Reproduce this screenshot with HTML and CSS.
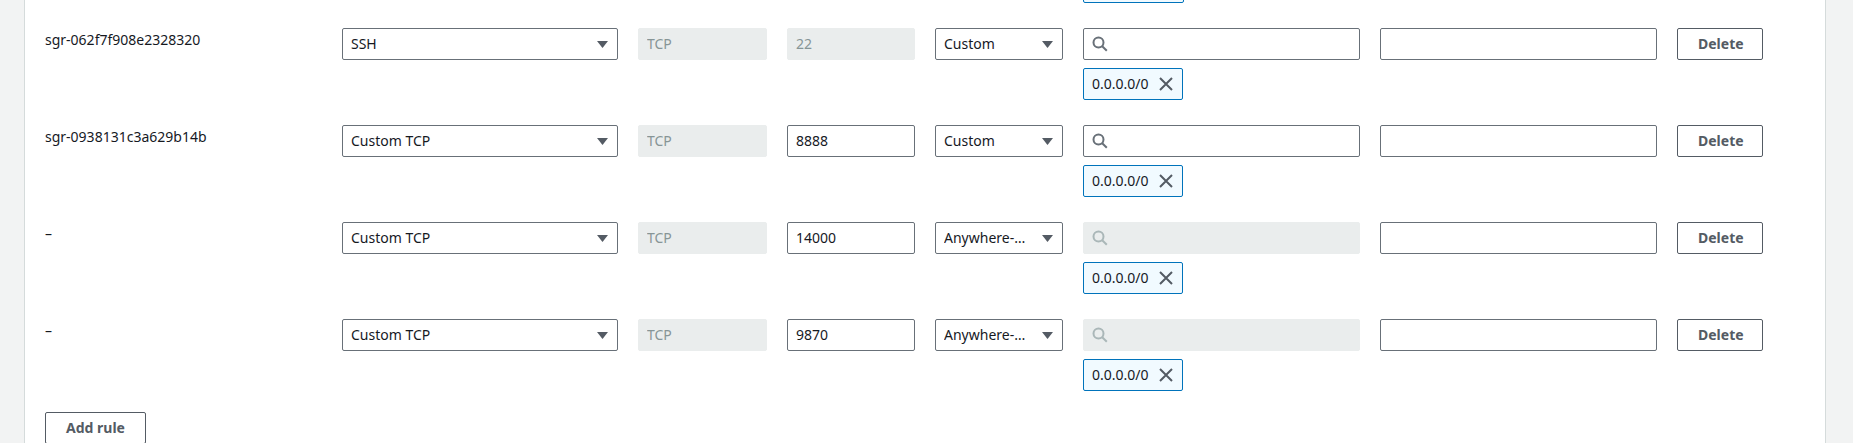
FILE: index.html
```html
<!DOCTYPE html>
<html>
<head>
<meta charset="utf-8">
<link rel="stylesheet" href="styles.css">
</head>
<body>
<div class="panel">
  <div class="row row-partial">
    <div class="cell-search partial-clip">
      <div class="chip chip-stub"></div>
    </div>
  </div>

  <div class="rules">
    <div class="row">
      <div class="rule-id">sgr-062f7f908e2328320</div>
      <div class="field select"><span class="val">SSH</span><svg class="caret" viewBox="0 0 11 7"><polygon points="0,0 11,0 5.5,7"/></svg></div>
      <div class="field disabled"><span class="val">TCP</span></div>
      <div class="field disabled"><span class="val">22</span></div>
      <div class="field select"><span class="val">Custom</span><svg class="caret" viewBox="0 0 11 7"><polygon points="0,0 11,0 5.5,7"/></svg></div>
      <div class="field search"><svg class="mag" viewBox="0 0 16 16"><circle cx="6.5" cy="6.5" r="5"/><path d="M10.2 10.2 L14.8 14.8"/></svg></div>
      <div class="field"></div>
      <div class="btn">Delete</div>
      <div class="chip chip-cell"><span>0.0.0.0/0</span><svg class="chip-x" viewBox="0 0 16 16"><path d="M2 2 L14 14 M14 2 L2 14"/></svg></div>
    </div>

    <div class="row">
      <div class="rule-id">sgr-0938131c3a629b14b</div>
      <div class="field select"><span class="val">Custom TCP</span><svg class="caret" viewBox="0 0 11 7"><polygon points="0,0 11,0 5.5,7"/></svg></div>
      <div class="field disabled"><span class="val">TCP</span></div>
      <div class="field"><span class="val">8888</span></div>
      <div class="field select"><span class="val">Custom</span><svg class="caret" viewBox="0 0 11 7"><polygon points="0,0 11,0 5.5,7"/></svg></div>
      <div class="field search"><svg class="mag" viewBox="0 0 16 16"><circle cx="6.5" cy="6.5" r="5"/><path d="M10.2 10.2 L14.8 14.8"/></svg></div>
      <div class="field"></div>
      <div class="btn">Delete</div>
      <div class="chip chip-cell"><span>0.0.0.0/0</span><svg class="chip-x" viewBox="0 0 16 16"><path d="M2 2 L14 14 M14 2 L2 14"/></svg></div>
    </div>

    <div class="row">
      <div class="rule-id">–</div>
      <div class="field select"><span class="val">Custom TCP</span><svg class="caret" viewBox="0 0 11 7"><polygon points="0,0 11,0 5.5,7"/></svg></div>
      <div class="field disabled"><span class="val">TCP</span></div>
      <div class="field"><span class="val">14000</span></div>
      <div class="field select"><span class="val">Anywhere-IPv4</span><svg class="caret" viewBox="0 0 11 7"><polygon points="0,0 11,0 5.5,7"/></svg></div>
      <div class="field search disabled"><svg class="mag" viewBox="0 0 16 16"><circle cx="6.5" cy="6.5" r="5"/><path d="M10.2 10.2 L14.8 14.8"/></svg></div>
      <div class="field"></div>
      <div class="btn">Delete</div>
      <div class="chip chip-cell"><span>0.0.0.0/0</span><svg class="chip-x" viewBox="0 0 16 16"><path d="M2 2 L14 14 M14 2 L2 14"/></svg></div>
    </div>

    <div class="row">
      <div class="rule-id">–</div>
      <div class="field select"><span class="val">Custom TCP</span><svg class="caret" viewBox="0 0 11 7"><polygon points="0,0 11,0 5.5,7"/></svg></div>
      <div class="field disabled"><span class="val">TCP</span></div>
      <div class="field"><span class="val">9870</span></div>
      <div class="field select"><span class="val">Anywhere-IPv4</span><svg class="caret" viewBox="0 0 11 7"><polygon points="0,0 11,0 5.5,7"/></svg></div>
      <div class="field search disabled"><svg class="mag" viewBox="0 0 16 16"><circle cx="6.5" cy="6.5" r="5"/><path d="M10.2 10.2 L14.8 14.8"/></svg></div>
      <div class="field"></div>
      <div class="btn">Delete</div>
      <div class="chip chip-cell"><span>0.0.0.0/0</span><svg class="chip-x" viewBox="0 0 16 16"><path d="M2 2 L14 14 M14 2 L2 14"/></svg></div>
    </div>
  </div>

  <div class="footer">
    <div class="btn">Add rule</div>
  </div>
</div>
</body>
</html>
```

FILE: styles.css
```css
html, body {
  margin: 0;
  padding: 0;
  height: 443px;
  overflow: hidden;
  background: #f2f3f3;
  font-family: "Noto Sans", "Open Sans", sans-serif;
  font-size: 14px;
  line-height: 22px;
  color: #16191f;
}

.panel {
  margin-left: 24px;
  width: 1802px;
  height: 443px;
  box-sizing: border-box;
  background: #ffffff;
  border-left: 1px solid #d5dbdb;
  border-right: 1px solid #d5dbdb;
  padding-left: 20px;
}

.row {
  display: grid;
  grid-template-columns: 277px 276px 129px 128px 128px 277px 277px 86px;
  column-gap: 20px;
  row-gap: 8px;
}

.row-partial {
  height: 3px;
}

.partial-clip {
  grid-column: 6;
  height: 3px;
  overflow: hidden;
  display: flex;
  flex-direction: column;
  justify-content: flex-end;
  align-items: flex-start;
}

.chip-stub {
  width: 101px;
}

.rules {
  margin-top: 25px;
  display: flex;
  flex-direction: column;
  gap: 25px;
}

.rule-id {
  padding-top: 1px;
  color: #16191f;
  white-space: nowrap;
}

.field {
  box-sizing: border-box;
  height: 32px;
  border: 1px solid #687078;
  border-radius: 2px;
  padding: 4px 8px;
  display: flex;
  align-items: center;
  background: #ffffff;
  min-width: 0;
}

.val {
  flex: 1;
  min-width: 0;
  white-space: nowrap;
  overflow: hidden;
  text-overflow: ellipsis;
}

.select {
  padding-right: 9px;
}

.select .val {
  padding-right: 16px;
}

.caret {
  width: 11px;
  height: 7px;
  fill: #545b64;
  flex: none;
}

.disabled {
  background: #eaeded;
  border-color: #eaeded;
  color: #879596;
}

.mag {
  width: 16px;
  height: 16px;
  fill: none;
  stroke: #687078;
  stroke-width: 2;
  flex: none;
}

.disabled .mag {
  stroke: #aab7b8;
}

.btn {
  box-sizing: border-box;
  height: 32px;
  border: 1px solid #545b64;
  border-radius: 2px;
  padding: 4px 20px;
  font-weight: 700;
  color: #545b64;
  text-align: center;
  background: #ffffff;
  white-space: nowrap;
}

.chip {
  box-sizing: border-box;
  height: 32px;
  border: 1px solid #0073bb;
  border-radius: 2px;
  background: #f1faff;
  padding: 4px 8px;
  display: flex;
  align-items: center;
  gap: 9px;
  color: #16191f;
  white-space: nowrap;
  flex: none;
}

.chip-cell {
  grid-column: 6;
  justify-self: start;
}

.chip-x {
  width: 16px;
  height: 16px;
  fill: none;
  stroke: #545b64;
  stroke-width: 2;
  flex: none;
}

.footer {
  margin-top: 21px;
  display: flex;
}
```
